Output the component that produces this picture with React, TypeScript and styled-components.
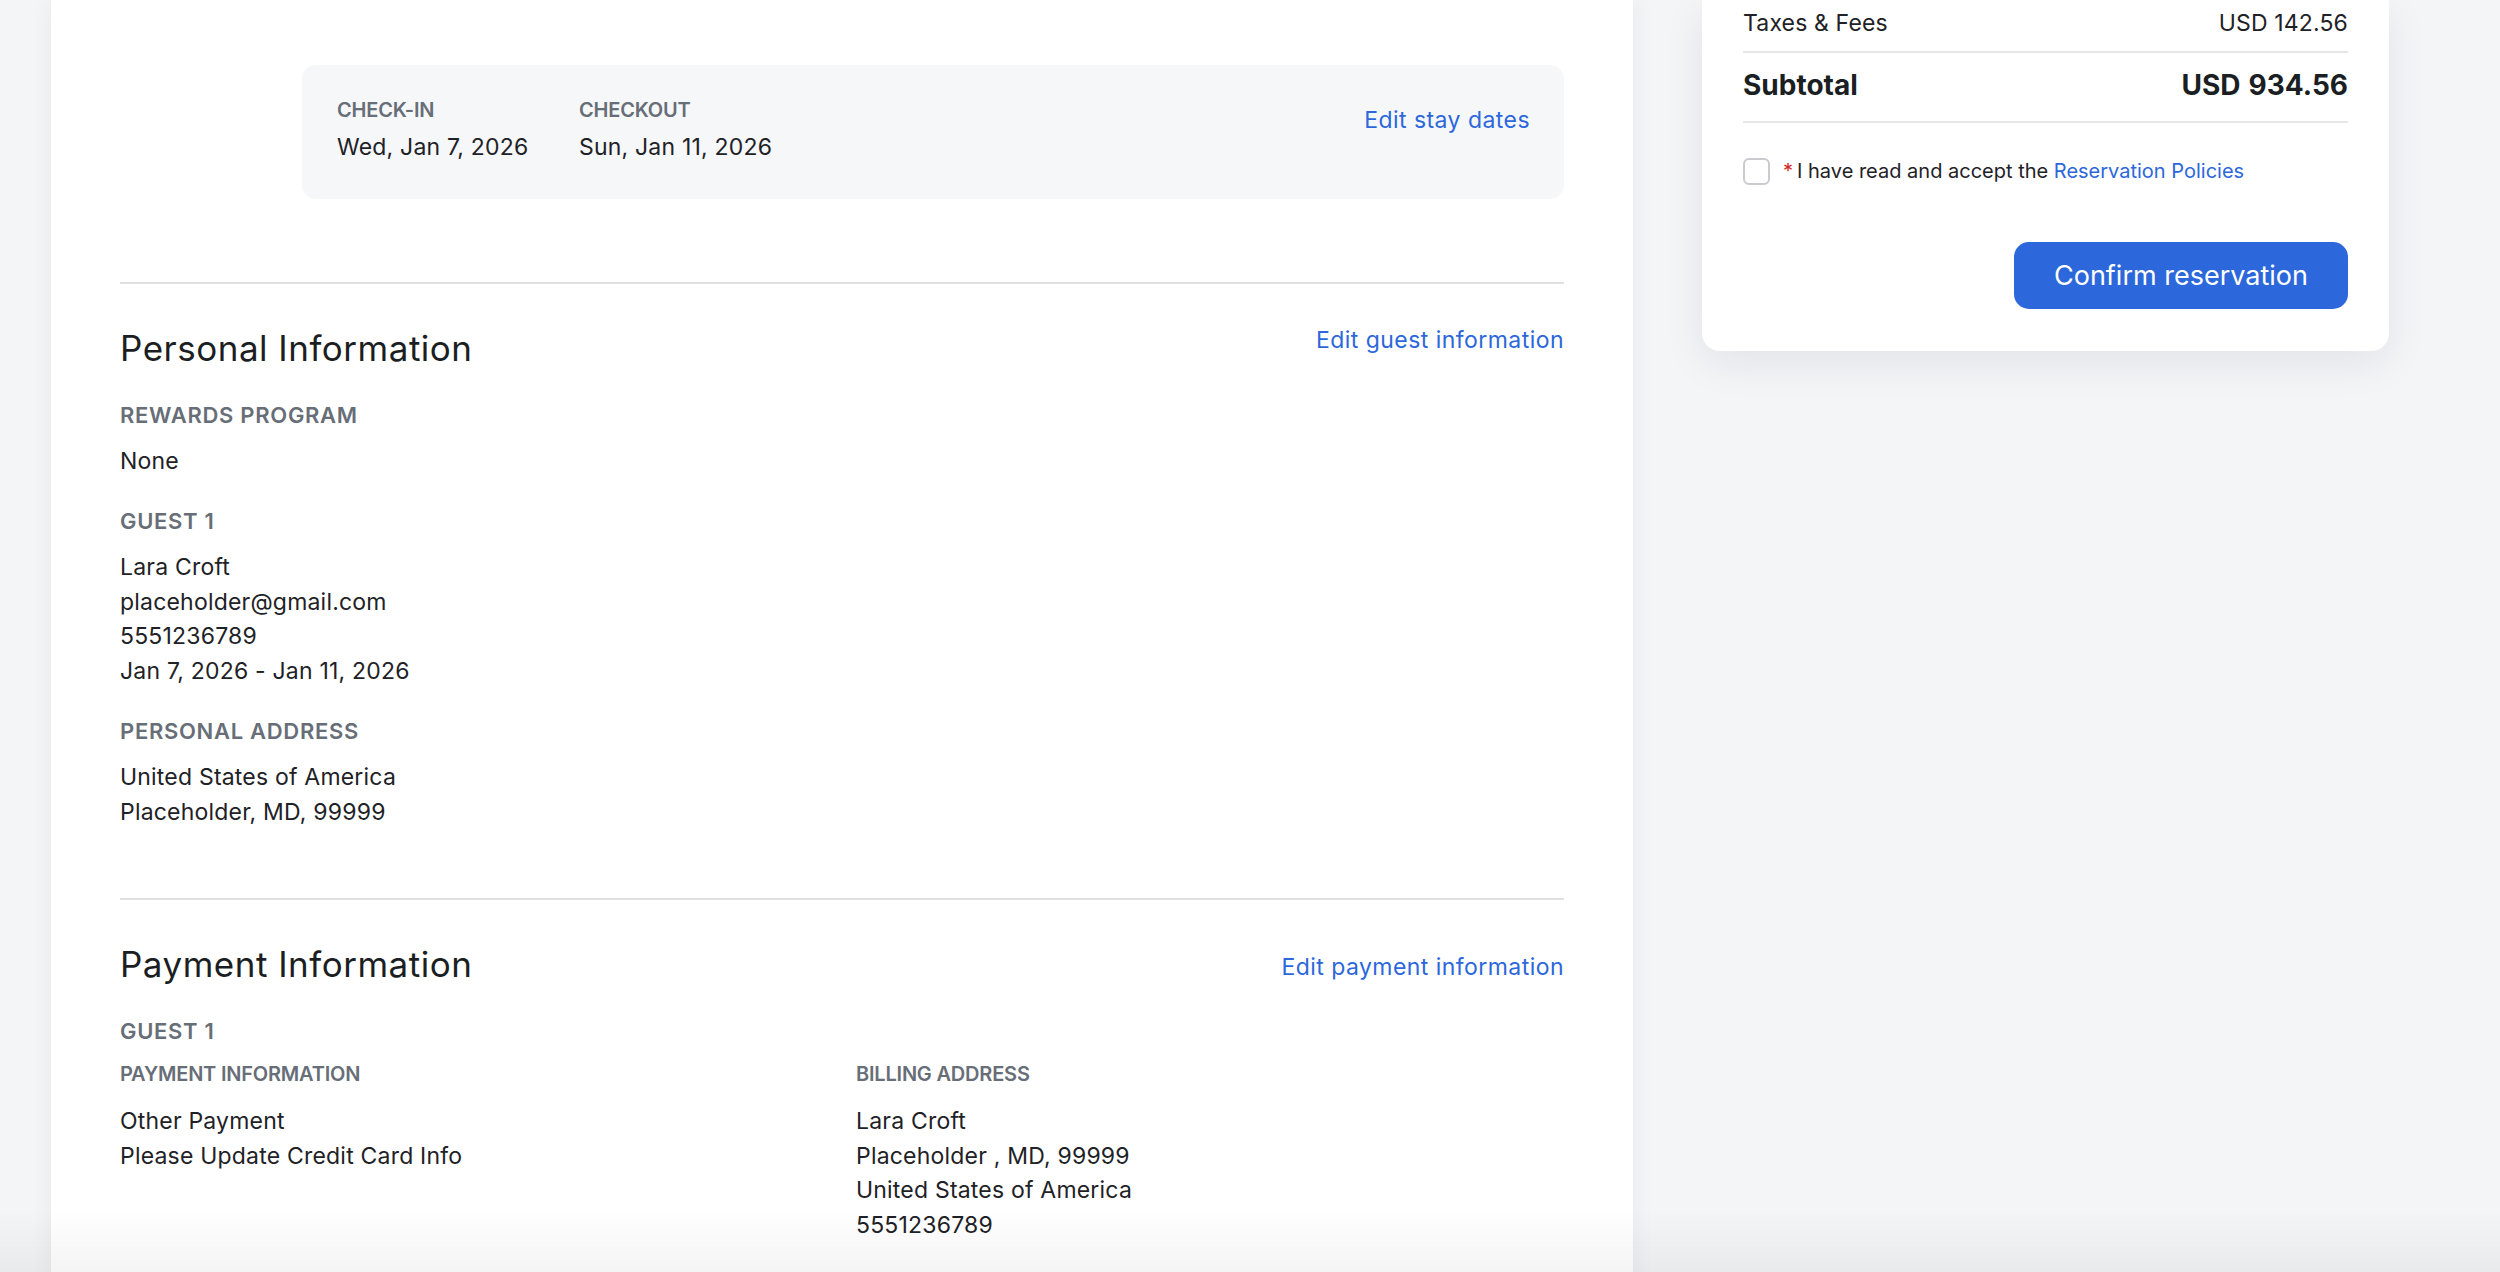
import React from "react";
import styled, { createGlobalStyle } from "styled-components";

const Global = createGlobalStyle`
  html, body { margin: 0; padding: 0; background: #f4f5f7; }
  body {
    font-family: Inter, "Noto Sans", "Liberation Sans", sans-serif;
    color: #1e2226;
    -webkit-font-smoothing: antialiased;
  }
  #root { min-height: 1272px; }
`;

const Page = styled.div`
  display: flex;
  align-items: flex-start;
  gap: 69px;
  padding-left: 51px;
  min-height: 1272px;
  box-sizing: border-box;
`;

const MainCard = styled.main`
  width: 1582px;
  box-sizing: border-box;
  background: #ffffff;
  padding: 65px 69px 0;
  min-height: 1272px;
  box-shadow: 0 0 22px rgba(20, 30, 50, 0.06);
`;

const StayBox = styled.div`
  margin: 0 0 83px 182px;
  height: 134px;
  box-sizing: border-box;
  background: #f6f7f9;
  border-radius: 14px;
  padding: 30px 34px 0 35px;
  display: flex;
  justify-content: space-between;
  align-items: flex-start;
`;

const StayDates = styled.div`
  display: flex;
`;

const StayItem = styled.div<{ $w?: number }>`
  display: flex;
  flex-direction: column;
  gap: 5px;
  width: ${(p) => (p.$w ? `${p.$w}px` : "auto")};
`;

const SmallLabel = styled.div`
  font-size: 20px;
  line-height: 30px;
  font-weight: 600;
  color: #676e77;
  text-transform: uppercase;
  letter-spacing: -0.2px;
`;

const Value = styled.div`
  font-size: 23px;
  line-height: 34.5px;
  color: #1e2226;
  letter-spacing: 0.2px;
`;

const EditLink = styled.a<{ $mt?: number }>`
  font-size: 23px;
  line-height: 34.5px;
  color: #2c67db;
  text-decoration: none;
  letter-spacing: 0.45px;
  cursor: pointer;
  margin-top: ${(p) => p.$mt ?? 0}px;
`;

const Divider = styled.hr`
  border: 0;
  height: 2px;
  margin: 0;
  background: #dfe0e2;
`;

const Section = styled.section`
  padding: 39px 0 69px;
`;

const SectionHeader = styled.div`
  display: flex;
  justify-content: space-between;
  align-items: flex-start;
  margin-bottom: 29px;
`;

const SectionTitle = styled.h2`
  margin: 5px 0 0;
  font-size: 35px;
  line-height: 40.8px;
  font-weight: 400;
  color: #1b1f23;
  letter-spacing: 0.5px;
`;

const Fields = styled.div`
  display: flex;
  flex-direction: column;
  gap: 26px;
`;

const Field = styled.div`
  display: flex;
  flex-direction: column;
`;

const FieldLabel = styled.div<{ $mb?: number }>`
  font-size: 22px;
  line-height: 34.5px;
  font-weight: 600;
  color: #676e77;
  text-transform: uppercase;
  letter-spacing: 0.7px;
  margin-bottom: ${(p) => p.$mb ?? 11.5}px;
`;

const PayGrid = styled.div`
  display: grid;
  grid-template-columns: 1fr 1fr;
  column-gap: 28px;
  margin-top: 10.5px;
`;

const PayCol = styled.div`
  display: flex;
  flex-direction: column;
  gap: 15px;
`;

const Lines = styled.div`
  display: flex;
  flex-direction: column;
`;

const SummaryCard = styled.aside`
  width: 687px;
  box-sizing: border-box;
  background: #ffffff;
  padding: 6px 41px 42px;
  border-radius: 0 0 18px 18px;
  box-shadow: 0 12px 40px rgba(20, 30, 50, 0.08);
`;

const LineRow = styled.div`
  display: flex;
  justify-content: space-between;
  font-size: 23px;
  line-height: 34.5px;
  letter-spacing: 0.15px;
  padding-bottom: 10.5px;
  border-bottom: 2px solid #e6e7e9;
`;

const TotalRow = styled.div`
  display: flex;
  justify-content: space-between;
  font-size: 28px;
  line-height: 33.6px;
  font-weight: 700;
  color: #1b1f23;
  padding: 15.5px 0 19px;
  border-bottom: 2px solid #e6e7e9;
`;

const TotalValue = styled.div`
  display: flex;
  gap: 8px;
`;

const AgreeRow = styled.label`
  display: flex;
  align-items: center;
  gap: 13px;
  margin-top: 33px;
  font-size: 20px;
  line-height: 31.5px;
  color: #1e2226;
`;

const CheckBox = styled.span`
  width: 27px;
  height: 27px;
  box-sizing: border-box;
  border: 2px solid #c9cbcf;
  border-radius: 6px;
  background: #fff;
  flex-shrink: 0;
`;

const Required = styled.span`
  color: #d7261e;
  margin-right: 4px;
`;

const InlineLink = styled.a`
  color: #2c67db;
  text-decoration: none;
`;

const ButtonRow = styled.div`
  display: flex;
  justify-content: flex-end;
  margin-top: 54px;
`;

const PrimaryButton = styled.button`
  width: 334px;
  height: 67px;
  border: none;
  border-radius: 15px;
  background: #2c67db;
  color: #ffffff;
  font-family: inherit;
  font-size: 27px;
  font-weight: 400;
  cursor: pointer;
`;

const BottomFade = styled.div`
  position: fixed;
  left: 0;
  right: 0;
  bottom: 0;
  height: 62px;
  pointer-events: none;
  background: linear-gradient(to bottom, rgba(0, 0, 0, 0), rgba(0, 0, 0, 0.045));
`;

export default function App() {
  return (
    <>
      <Global />
      <Page>
        <MainCard>
          <StayBox>
            <StayDates>
              <StayItem $w={242}>
                <SmallLabel>Check-in</SmallLabel>
                <Value>Wed, Jan 7, 2026</Value>
              </StayItem>
              <StayItem>
                <SmallLabel>Checkout</SmallLabel>
                <Value>Sun, Jan 11, 2026</Value>
              </StayItem>
            </StayDates>
            <EditLink $mt={8}>Edit stay dates</EditLink>
          </StayBox>

          <Divider />
          <Section>
            <SectionHeader>
              <SectionTitle>Personal Information</SectionTitle>
              <EditLink>Edit guest information</EditLink>
            </SectionHeader>
            <Fields>
              <Field>
                <FieldLabel>Rewards Program</FieldLabel>
                <Value>None</Value>
              </Field>
              <Field>
                <FieldLabel>Guest 1</FieldLabel>
                <Lines>
                  <Value>Lara Croft</Value>
                  <Value>placeholder@gmail.com</Value>
                  <Value>5551236789</Value>
                  <Value>Jan 7, 2026 - Jan 11, 2026</Value>
                </Lines>
              </Field>
              <Field>
                <FieldLabel>Personal Address</FieldLabel>
                <Lines>
                  <Value>United States of America</Value>
                  <Value>Placeholder, MD, 99999</Value>
                </Lines>
              </Field>
            </Fields>
          </Section>

          <Divider />
          <Section>
            <SectionHeader>
              <SectionTitle>Payment Information</SectionTitle>
              <EditLink $mt={11}>Edit payment information</EditLink>
            </SectionHeader>
            <FieldLabel $mb={0}>Guest 1</FieldLabel>
            <PayGrid>
              <PayCol>
                <SmallLabel>Payment Information</SmallLabel>
                <Lines>
                  <Value>Other Payment</Value>
                  <Value>Please Update Credit Card Info</Value>
                </Lines>
              </PayCol>
              <PayCol>
                <SmallLabel>Billing Address</SmallLabel>
                <Lines>
                  <Value>Lara Croft</Value>
                  <Value>Placeholder , MD, 99999</Value>
                  <Value>United States of America</Value>
                  <Value>5551236789</Value>
                </Lines>
              </PayCol>
            </PayGrid>
          </Section>
        </MainCard>

        <SummaryCard>
          <LineRow>
            <span>Taxes &amp; Fees</span>
            <span>USD 142.56</span>
          </LineRow>
          <TotalRow>
            <span>Subtotal</span>
            <TotalValue>
              <span>USD</span>
              <span>934.56</span>
            </TotalValue>
          </TotalRow>
          <AgreeRow>
            <CheckBox />
            <span>
              <Required>*</Required>I have read and accept the{" "}
              <InlineLink>Reservation Policies</InlineLink>
            </span>
          </AgreeRow>
          <ButtonRow>
            <PrimaryButton>Confirm reservation</PrimaryButton>
          </ButtonRow>
        </SummaryCard>
      </Page>
      <BottomFade />
    </>
  );
}
